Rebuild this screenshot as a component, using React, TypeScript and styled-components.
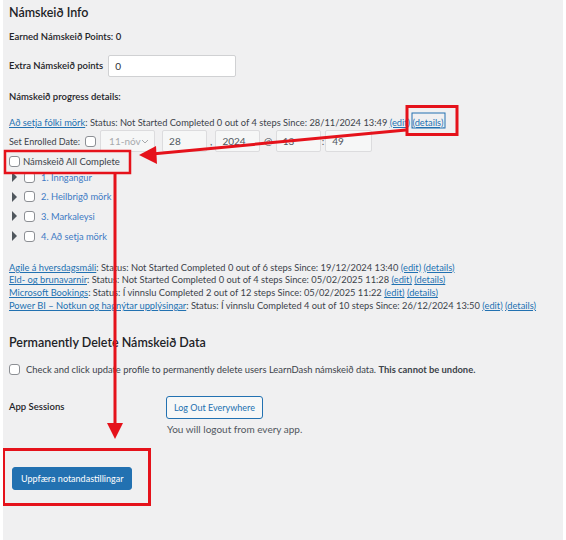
import React from 'react';
import styled, { createGlobalStyle } from 'styled-components';

const GlobalStyle = createGlobalStyle`
  body {
    margin: 0;
    background: #ffffff;
    font-family: Lato, "Noto Sans", sans-serif;
    color: #3c434a;
  }
`;

const Page = styled.div`
  position: relative;
  width: 560px;
  height: 540px;
  margin-left: 3px;
  background: #f0f0f1;
  padding: 0 6px;
  box-sizing: border-box;
  font-size: 9px;
  line-height: 13px;
  overflow: hidden;
`;

const Heading = styled.h2<{ $top: number }>`
  margin: ${(p) => p.$top}px 0 0;
  font-size: 12.5px;
  font-weight: 600;
  color: #1d2327;
  line-height: 16px;
`;

const Strong = styled.div<{ $top: number }>`
  margin-top: ${(p) => p.$top}px;
  font-size: 9.5px;
  font-weight: 600;
  line-height: 14px;
  color: #1d2327;
`;

const FieldRow = styled.div<{ $top: number; $gap?: number; $size?: number }>`
  display: flex;
  align-items: center;
  gap: ${(p) => p.$gap ?? 0}px;
  margin-top: ${(p) => p.$top}px;
  font-size: ${(p) => p.$size ?? 9}px;
  white-space: nowrap;
`;

const TextInput = styled.div<{ $w: number; $ml?: number; $disabled?: boolean }>`
  width: ${(p) => p.$w}px;
  height: 22px;
  margin-left: ${(p) => p.$ml ?? 0}px;
  box-sizing: border-box;
  border: 1px solid ${(p) => (p.$disabled ? '#dcdcde' : '#d0d1d3')};
  border-radius: 2px;
  background: ${(p) => (p.$disabled ? '#f6f7f7' : '#ffffff')};
  display: flex;
  align-items: center;
  padding: 0 6px;
  font-size: 10px;
  color: ${(p) => (p.$disabled ? '#50575e' : '#2c3338')};
`;

const SelectBox = styled(TextInput)`
  justify-content: space-between;
  color: #a7aaad;
  padding: 0 5px 0 8px;
`;

const Sep = styled.span<{ $pad: number }>`
  padding: 0 ${(p) => p.$pad}px;
  color: #50575e;
  font-size: 10px;
`;

const Line = styled.div<{ $top?: number; $lh?: number }>`
  margin-top: ${(p) => p.$top ?? 0}px;
  line-height: ${(p) => p.$lh ?? 13}px;
  font-size: 9.3px;
  white-space: nowrap;
`;

const A = styled.a`
  color: #2271b1;
  text-decoration: underline;
  text-underline-offset: 1px;
`;

const Box = styled.span<{ $ml?: number }>`
  display: inline-block;
  flex: none;
  width: 11px;
  height: 11px;
  margin-left: ${(p) => p.$ml ?? 0}px;
  box-sizing: border-box;
  border: 1px solid #8c8f94;
  border-radius: 3px;
  background: #ffffff;
`;

const TreeList = styled.div`
  display: flex;
  flex-direction: column;
  gap: 7.7px;
  margin-top: 3px;
  padding-left: 3px;
`;

const TreeItem = styled.div`
  display: flex;
  align-items: center;
  height: 12px;
  font-size: 9.3px;
`;

const Caret = styled.span`
  width: 0;
  height: 0;
  border-top: 5px solid transparent;
  border-bottom: 5px solid transparent;
  border-left: 5px solid #50575e;
  margin-right: 7px;
`;

const StepLink = styled.a`
  color: #3d7ac4;
  margin-left: 6px;
  text-decoration: none;
`;

const Courses = styled.div`
  margin-top: 19.6px;
`;

const SessionRow = styled.div`
  display: grid;
  grid-template-columns: 157px auto;
  margin-top: 20.5px;
`;

const SessionLabel = styled.div`
  font-size: 9.5px;
  font-weight: 600;
  line-height: 14px;
  color: #1d2327;
  padding-top: 4px;
`;

const OutlineButton = styled.button`
  height: 23px;
  padding: 0 7px;
  border: 1px solid #2271b1;
  border-radius: 3px;
  background: #f6f7f7;
  color: #2271b1;
  font: inherit;
  font-size: 9px;
`;

const Hint = styled.div`
  margin-top: 4px;
  margin-left: 1px;
  font-size: 10px;
  color: #50575e;
`;

const PrimaryButton = styled.button`
  display: block;
  margin: 31px 0 0 3px;
  height: 23px;
  padding: 0 8px;
  border: 1px solid #2271b1;
  border-radius: 3px;
  background: #2271b1;
  color: #ffffff;
  font: inherit;
  font-size: 9px;
`;

const Overlay = styled.svg`
  position: absolute;
  left: -3px;
  top: 0;
  pointer-events: none;
`;

const RED = '#e5121b';

const courses = [
  { name: 'Agile á hversdagsmáli', status: 'Not Started', done: 0, total: 6, since: '19/12/2024 13:40' },
  { name: 'Eld- og brunavarnir', status: 'Not Started', done: 0, total: 4, since: '05/02/2025 11:28' },
  { name: 'Microsoft Bookings', status: 'Í vinnslu', done: 2, total: 12, since: '05/02/2025 11:22' },
  { name: 'Power BI – Notkun og hagnýtar upplýsingar', status: 'Í vinnslu', done: 4, total: 10, since: '26/12/2024 13:50' },
];

const steps = ['1. Inngangur', '2. Heilbrigð mörk', '3. Markaleysi', '4. Að setja mörk'];

export default function App() {
  return (
    <Page>
      <GlobalStyle />
      <Heading $top={5}>Námskeið Info</Heading>
      <Strong $top={9}>Earned Námskeið Points: 0</Strong>
      <FieldRow $top={11} $gap={5}>
        <Strong $top={0}>Extra Námskeið points</Strong>
        <TextInput $w={128}>0</TextInput>
      </FieldRow>
      <Strong $top={13}>Námskeið progress details:</Strong>

      <Line $top={11.5}>
        <A href="#">Að setja fólki mörk</A>: Status: Not Started Completed 0 out of 4 steps Since: 28/11/2024 13:49{' '}
        <A href="#">(edit)</A> <A href="#">(details)</A>
      </Line>
      <FieldRow $top={1.5}>
        <span>Set Enrolled Date:</span>
        <Box $ml={5} />
        <SelectBox $w={55} $ml={4} $disabled>
          11-nóv
          <svg width="8" height="5" viewBox="0 0 8 5">
            <path d="M1 1l3 3 3-3" stroke="#a7aaad" fill="none" />
          </svg>
        </SelectBox>
        <TextInput $w={45} $ml={7} $disabled>28</TextInput>
        <Sep $pad={3}>,</Sep>
        <TextInput $w={45} $disabled>2024</TextInput>
        <Sep $pad={3.5}>@</Sep>
        <TextInput $w={45} $disabled>13</TextInput>
        <Sep $pad={1}>:</Sep>
        <TextInput $w={47} $disabled>49</TextInput>
      </FieldRow>
      <FieldRow $top={3} $gap={3} $size={9.5}>
        <Box />
        <span>Námskeið All Complete</span>
      </FieldRow>
      <TreeList>
        {steps.map((s) => (
          <TreeItem key={s}>
            <Caret />
            <Box />
            <StepLink href="#">{s}</StepLink>
          </TreeItem>
        ))}
      </TreeList>

      <Courses>
        {courses.map((c) => (
          <Line key={c.name} $lh={12.7}>
            <A href="#">{c.name}</A>: Status: {c.status} Completed {c.done} out of {c.total} steps Since: {c.since}{' '}
            <A href="#">(edit)</A> <A href="#">(details)</A>
          </Line>
        ))}
      </Courses>

      <Heading $top={22.6}>Permanently Delete Námskeið Data</Heading>
      <FieldRow $top={11.5} $gap={6} $size={9.4}>
        <Box />
        <span>
          Check and click update profile to permanently delete users LearnDash námskeið data.{' '}
          <b style={{ fontWeight: 700 }}>This cannot be undone.</b>
        </span>
      </FieldRow>

      <SessionRow>
        <SessionLabel>App Sessions</SessionLabel>
        <div>
          <OutlineButton>Log Out Everywhere</OutlineButton>
          <Hint>You will logout from every app.</Hint>
        </div>
      </SessionRow>

      <PrimaryButton>Uppfæra notandastillingar</PrimaryButton>

      <Overlay width="566" height="540" viewBox="0 0 566 540">
        <rect x="407" y="106.5" width="50" height="28" fill="none" stroke={RED} strokeWidth="3" />
        <rect x="412" y="113" width="33" height="15" fill="none" stroke="#2271b1" strokeWidth="1" />
        <rect x="5" y="151" width="125" height="22" fill="none" stroke={RED} strokeWidth="2.5" />
        <line x1="406" y1="130" x2="152" y2="154" stroke={RED} strokeWidth="3" />
        <polygon points="139,155 156,146 157,164" fill={RED} />
        <line x1="115" y1="174" x2="115" y2="426" stroke={RED} strokeWidth="3" />
        <polygon points="107,423 123,423 115,439" fill={RED} />
        <rect x="3.5" y="449.5" width="146" height="55" fill="none" stroke={RED} strokeWidth="3" />
      </Overlay>
    </Page>
  );
}
